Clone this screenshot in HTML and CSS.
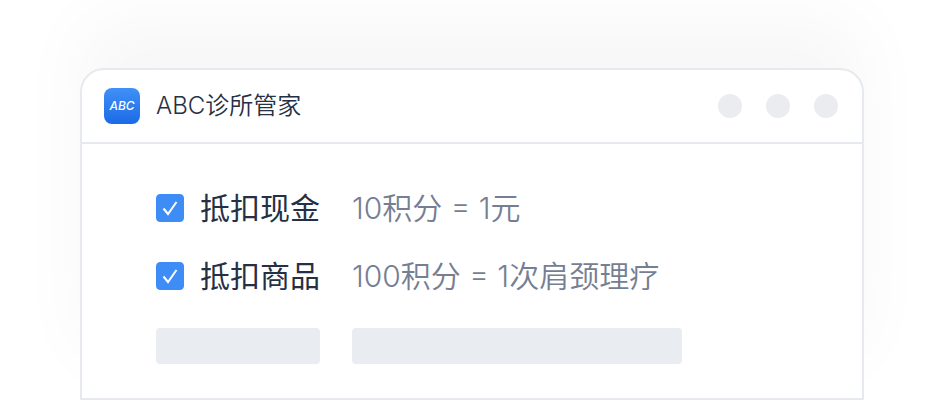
FILE: index.html
```html
<!DOCTYPE html>
<html lang="zh-CN">

<head>
    <meta charset="UTF-8">
    <meta name="viewport" content="width=device-width, initial-scale=1.0">
    <title>ABC诊所管家</title>
    <link rel="stylesheet" href="styles.css">
</head>

<body>
    <main class="window">
        <!-- Title bar -->
        <header class="titlebar">
            <span class="logo">ABC</span>
            <h1 class="title">ABC诊所管家</h1>
            <div class="dots">
                <span class="dot"></span>
                <span class="dot"></span>
                <span class="dot"></span>
            </div>
        </header>

        <div class="content">
            <div class="options">
                <div class="row">
                    <label class="option">
                        <span class="check">
                            <input type="checkbox" checked>
                            <svg class="tick" viewBox="0 0 28 28"><path d="M7.5 14.5 12 20 20.5 8" /></svg>
                        </span>
                        抵扣现金
                    </label>
                    <span class="rule">10积分 = 1元</span>
                </div>
                <div class="row">
                    <label class="option">
                        <span class="check">
                            <input type="checkbox" checked>
                            <svg class="tick" viewBox="0 0 28 28"><path d="M7.5 14.5 12 20 20.5 8" /></svg>
                        </span>
                        抵扣商品
                    </label>
                    <span class="rule">100积分 = 1次肩颈理疗</span>
                </div>
            </div>

            <!-- Placeholder row -->
            <div class="row">
                <div class="bar"></div>
                <div class="bar bar-long"></div>
            </div>
        </div>
    </main>
</body>

</html>
```

FILE: styles.css
```css
* {
    box-sizing: border-box;
}

body {
    margin: 0;
    padding: 68px 80px 0;
    background: #fff;
    color: #253044;
    font-family: Inter, "Noto Sans CJK SC", sans-serif;
    overflow-x: hidden;
}

.window {
    background: #fff;
    border: 2px solid #e6eaee;
    border-radius: 24px 24px 0 0;
    box-shadow: 0 -48px 72px rgba(0, 0, 0, 0.035);
}

.titlebar {
    display: flex;
    align-items: center;
    gap: 16px;
    height: 74px;
    padding: 0 24px 0 22px;
    border-bottom: 2px solid #e6eaee;
}

.logo {
    width: 36px;
    height: 36px;
    border-radius: 8px;
    background: linear-gradient(#4090f7, #1c6ae6);
    color: #fff;
    font-size: 12px;
    font-style: italic;
    font-weight: 500;
    line-height: 36px;
    text-align: center;
}

.title {
    margin: 0;
    font-size: 24px;
    font-weight: 350;
    line-height: 36px;
}

.dots {
    display: flex;
    gap: 24px;
    margin-left: auto;
}

.dot {
    width: 24px;
    height: 24px;
    border-radius: 50%;
    background: #eaecf0;
}

.content {
    display: flex;
    flex-direction: column;
    gap: 32px;
    padding: 44px 74px 34px;
}

.options {
    display: flex;
    flex-direction: column;
    gap: 28px;
}

.row {
    display: grid;
    grid-template-columns: 164px 1fr;
    gap: 32px;
    font-size: 30px;
    line-height: 40px;
    white-space: nowrap;
}

.option {
    display: flex;
    align-items: center;
    gap: 16px;
    cursor: pointer;
}

.check {
    position: relative;
    width: 28px;
    height: 28px;
}

.check input {
    display: block;
    appearance: none;
    width: 28px;
    height: 28px;
    margin: 0;
    border: 1px solid #3e8df7;
    border-radius: 4px;
    cursor: pointer;
}

.check input:checked {
    background: #3e8df7;
}

.tick {
    position: absolute;
    inset: 0;
    fill: none;
    stroke: #fff;
    stroke-width: 2;
    pointer-events: none;
}

.rule {
    color: #757e93;
    font-weight: 350;
}

.bar {
    height: 36px;
    border-radius: 4px;
    background: #e9ecf1;
}

.bar-long {
    width: 100%;
    max-width: 330px;
}
```
